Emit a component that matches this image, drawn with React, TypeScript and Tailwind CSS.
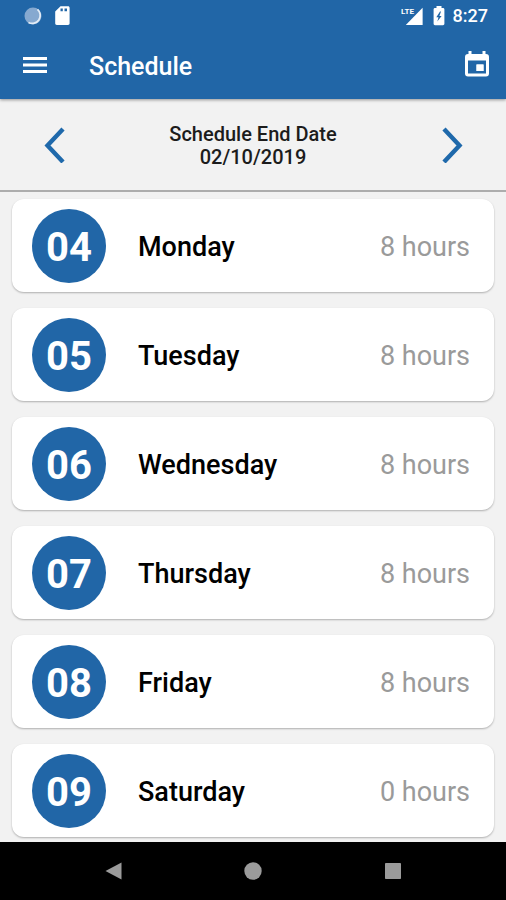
import React from 'react';

type Day = {
  date: string;
  name: string;
  hours: number;
};

const days: Day[] = [
  { date: '04', name: 'Monday', hours: 8 },
  { date: '05', name: 'Tuesday', hours: 8 },
  { date: '06', name: 'Wednesday', hours: 8 },
  { date: '07', name: 'Thursday', hours: 8 },
  { date: '08', name: 'Friday', hours: 8 },
  { date: '09', name: 'Saturday', hours: 0 },
];

function StatusBar() {
  return (
    <div className="flex h-8 items-center justify-between pl-6 pr-[18px]">
      <div className="flex items-center gap-3">
        <svg className="h-[18px] w-[18px]" viewBox="0 0 18 18">
          <circle cx="9" cy="9" r="8.5" fill="#86a9d0" />
          <path d="M13.5 2.4A8 8 0 0 1 4.5 15.5" fill="none" stroke="#e3ecf6" strokeWidth="1.8" />
        </svg>
        <svg className="h-5 w-4" viewBox="0 0 16 20">
          <path
            fillRule="evenodd"
            fill="#fff"
            d="M6.500 .3h7.500c1 0 1.600.7 1.600 1.600v15.400c0 1-.6 1.600-1.600 1.600H2.800c-1 0-1.600-.6-1.600-1.600V5.500zM6.500 2.500v2.800h2.300V2.500zM10.500 2.500v2.800h2.500V2.500z"
          />
        </svg>
      </div>
      <div className="flex items-center">
        <svg className="h-5 w-[22px]" viewBox="0 0 22 20">
          <text x="0" y="8" fill="#fff" fontSize="8" fontWeight="700">
            LTE
          </text>
          <path d="M21.6 1.8V19H4.8z" fill="#fff" />
        </svg>
        <svg className="ml-2.5 h-5 w-3" viewBox="0 0 12 20">
          <path
            fillRule="evenodd"
            fill="#fff"
            d="M3.5 0h5v2H10c.8 0 1.4.6 1.4 1.4v14.400c0 .8-.6 1.400-1.400 1.400H2c-.8 0-1.400-.6-1.400-1.400V3.400C.6 2.600 1.200 2 2 2h1.500zM7 5.600 3.300 11.200h2.200L4.300 15.600 8.600 10H6.400L8 5.600z"
          />
        </svg>
        <span className="ml-2 text-lg font-medium leading-5">8:27</span>
      </div>
    </div>
  );
}

function AppBar() {
  return (
    <div className="flex h-[67px] items-center pl-[19px] pr-[13px]">
      <button type="button" aria-label="Menu">
        <svg className="h-8 w-8" viewBox="0 0 32 32" fill="currentColor">
          <path d="M4 7h24v3H4zM4 13.500h24v3H4zM4 20h24v3H4z" />
        </svg>
      </button>
      <h1 className="ml-[38px] flex-1 pt-0.5 text-[25px] font-medium leading-8">Schedule</h1>
      <button type="button" aria-label="Today">
        <svg className="h-8 w-8" viewBox="0 0 32 32" fill="currentColor">
          <path
            fillRule="evenodd"
            d="M7.500 1h3v3h11V1h3v3H25a3 3 0 0 1 3 3v16.500a3 3 0 0 1-3 3H7a3 3 0 0 1-3-3V7a3 3 0 0 1 3-3h.5zM7 10.500v13h18v-13zM15.500 14.500H22.500v6.500H15.500z"
          />
          <path d="M15.500 14.500h7V21h-7z" />
        </svg>
      </button>
    </div>
  );
}

function DateBar() {
  return (
    <div className="flex h-[93px] items-center justify-between border-b-2 border-[#adadad] px-[43px]">
      <button type="button" aria-label="Previous week" className="text-[#1f69ab]">
        <svg className="h-9 w-6" viewBox="0 0 24 36" fill="none" stroke="currentColor" strokeWidth="4.4">
          <path d="M20 2 4.5 18.5 20 35" />
        </svg>
      </button>
      <div className="pt-0.5 text-center text-[20px] font-medium leading-[23px] text-[#1c1c1c]">
        <p>Schedule End Date</p>
        <p>02/10/2019</p>
      </div>
      <button type="button" aria-label="Next week" className="text-[#1f69ab]">
        <svg className="h-9 w-6" viewBox="0 0 24 36" fill="none" stroke="currentColor" strokeWidth="4.4">
          <path d="M5 2 20.5 18.5 5 35" />
        </svg>
      </button>
    </div>
  );
}

function DayCard({ day }: { day: Day }) {
  return (
    <li className="flex h-[93px] items-center rounded-xl bg-white pl-5 pr-6 shadow-[0_1px_2px_rgba(0,0,0,0.28)]">
      <span className="flex h-[74px] w-[74px] items-center justify-center rounded-full bg-[#2166a7] pt-1 text-[40px] font-bold leading-none text-white">
        {day.date}
      </span>
      <span className="ml-8 flex-1 pt-1 text-[27px] font-medium text-black">{day.name}</span>
      <span className="pt-1 text-[27px] text-[#9a9a9a]">{day.hours} hours</span>
    </li>
  );
}

function NavigationBar() {
  return (
    <nav className="flex h-[58px] items-center justify-around bg-black px-11 text-[#9b9b9b]">
      <button type="button" aria-label="Back">
        <svg className="h-5 w-5" viewBox="0 0 20 20" fill="currentColor">
          <path d="M1.5 10l16-8.500v17z" />
        </svg>
      </button>
      <button type="button" aria-label="Home">
        <svg className="h-5 w-5" viewBox="0 0 20 20" fill="currentColor">
          <circle cx="10" cy="10" r="8.7" />
        </svg>
      </button>
      <button type="button" aria-label="Recent apps">
        <svg className="h-5 w-5" viewBox="0 0 20 20" fill="currentColor">
          <rect x="3" y="2" width="16" height="16" rx="0.8" />
        </svg>
      </button>
    </nav>
  );
}

export default function App() {
  return (
    <div className="flex min-h-screen flex-col bg-[#f2f2f2] font-[Roboto,sans-serif]">
      <header className="relative bg-[#2166a7] text-white shadow-[0_1px_3px_rgba(0,0,0,0.4)]">
        <StatusBar />
        <AppBar />
      </header>
      <DateBar />
      <ul className="flex flex-1 flex-col gap-4 px-3 pb-1 pt-[7px]">
        {days.map((day) => (
          <DayCard key={day.date} day={day} />
        ))}
      </ul>
      <NavigationBar />
    </div>
  );
}
